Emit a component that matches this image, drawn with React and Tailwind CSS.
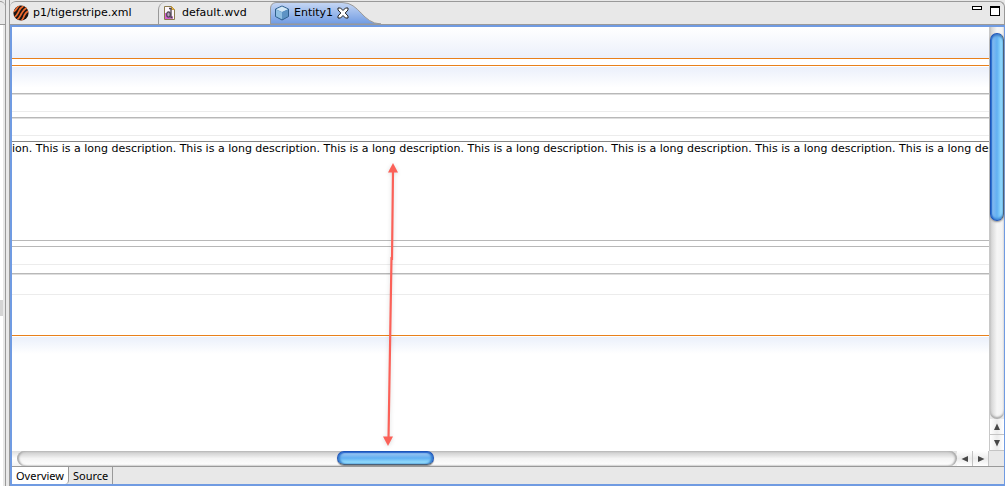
import React, { useState } from 'react';

const DESCRIPTION = 'ion. ' + 'This is a long description. '.repeat(8);

function TigerIcon() {
  return (
    <svg className="w-4 h-4 shrink-0" viewBox="0 0 16 16">
      <defs>
        <clipPath id="tiger-clip">
          <circle cx="8" cy="8" r="7.6" />
        </clipPath>
      </defs>
      <circle cx="8" cy="8" r="7.6" fill="#1c1614" />
      <g clipPath="url(#tiger-clip)" stroke="#ee6a30" strokeWidth="1.7" fill="none">
        <path d="M0 7C2 6 3 5 4 3S5 1 7 0" />
        <path d="M1 12.5C4 11 4.500 9 5.500 7S7 3 10.500 1" />
        <path d="M3.500 15C7 13 7 11 8.500 8.500S10 5 14 2.500" />
        <path d="M8 16C10.500 14 10.500 12 11.500 10S13 7 16 5.500" />
      </g>
    </svg>
  );
}

function DiagramFileIcon() {
  return (
    <svg className="w-4 h-4 shrink-0" viewBox="0 0 16 16">
      <path d="M2.500 1.500H9.500L12.500 4.500V14.500H2.500Z" fill="#fdf6fb" stroke="#8a7a4c" />
      <path d="M9.500 1.500V4.500H12.500Z" fill="#e8bd55" stroke="#c89c3c" />
      <rect x="3" y="8" width="5" height="6" fill="#d45fd0" />
      <rect x="8" y="11" width="3" height="3" fill="#d98ad6" />
      <ellipse cx="6.500" cy="9.500" rx="1.800" ry="2.700" fill="#b9a3c0" stroke="#4b4350" strokeWidth="1.200" />
      <path d="M7 3.500H9V12.500H10.500" fill="none" stroke="#4b4350" strokeWidth="1.300" />
    </svg>
  );
}

function CubeIcon() {
  return (
    <svg className="w-4 h-4 shrink-0" viewBox="0 0 16 16">
      <path d="M8 1L14.500 4V11.500L8 15L1.500 11.500V4Z" fill="#4b83b8" stroke="#2f5f8c" />
      <path d="M8 1.500L14 4.200L8 7L2 4.200Z" fill="#d3e8f6" />
      <path d="M2 4.500L8 7.300V14.300L2 11.200Z" fill="#8fbfe2" />
      <path d="M14 4.500L8 7.300V14.300L14 11.200Z" fill="#5d93c4" />
    </svg>
  );
}

function CloseIcon() {
  return (
    <svg className="w-3 h-3" viewBox="0 0 12 12">
      <path
        d="M1 1H3.500L6 3.500L8.500 1H11V3L8.200 6L11 9V11H8.500L6 8.500L3.500 11H1V9L3.800 6L1 3Z"
        fill="#fff"
        stroke="#222"
        strokeWidth="1"
      />
    </svg>
  );
}

function ArrowIcon({ d }) {
  return (
    <svg className="w-2 h-2" viewBox="0 0 8 8">
      <path d={d} fill="#484848" />
    </svg>
  );
}

function ScrollButton({ label, d, className }) {
  return (
    <button
      type="button"
      aria-label={label}
      className={`flex items-center justify-center shrink-0 border-[#c4c4c4] from-white via-[#ececec] to-white ${className}`}
    >
      <ArrowIcon d={d} />
    </button>
  );
}

// One band of the form: its height, and the rule drawn beneath it
const TOP_BANDS = [
  'h-8 bg-gradient-to-b from-white to-[#ebf0fb] border-b border-[#e8801c]',
  'h-[7px] bg-white border-b border-[#e8801c]',
  'h-[27px] mt-px bg-gradient-to-b from-[#ebf0fb] to-white to-80% border-b border-[#b8b8b8]',
  'h-[18px] border-t border-t-[#dedede] border-b border-b-[#ececec]',
  'h-[6px] border-b border-[#b8b8b8]',
  'h-[18px] border-t border-t-[#dedede] border-b border-b-[#ececec]',
  'h-[6px] border-b border-[#868686]',
];

const BOTTOM_BANDS = [
  'h-[6px] border-t border-[#b8b8b8]',
  'h-[19px] border-t border-t-[#b8b8b8] border-b border-b-[#ececec]',
  'h-[9px] border-b border-[#b8b8b8]',
  'h-[21px] border-t border-t-[#dedede] border-b border-b-[#ececec]',
  'h-[41px] border-b border-[#e8801c]',
  'h-[17px] mt-px bg-gradient-to-b from-[#ebf0fb] to-white',
];

function FormPage() {
  return (
    <div className="relative flex-1 min-w-0 overflow-hidden bg-white">
      {TOP_BANDS.map((band, i) => (
        <div key={i} className={band}></div>
      ))}
      <textarea
        aria-label="Description"
        readOnly
        wrap="off"
        value={DESCRIPTION}
        className="block w-full h-[98px] overflow-hidden resize-none outline-none text-[11px] leading-[14px] text-black"
      />
      {BOTTOM_BANDS.map((band, i) => (
        <div key={i} className={band}></div>
      ))}

      {/* double-headed arrow over the form */}
      <svg className="absolute top-[134px] left-[370px] w-[30px] h-[288px] drop-shadow-sm" viewBox="0 0 30 288">
        <path d="M11 10L10 99M9.500 96L6.500 278" fill="none" stroke="#fb6158" strokeWidth="2.200" />
        <path d="M11 2L16 11.500H6Z" fill="#fb6158" />
        <path d="M6 285L11 275.500H1Z" fill="#fb6158" />
      </svg>
    </div>
  );
}

function VerticalScrollbar() {
  return (
    <div className="flex flex-col w-[15px] shrink-0 border-l border-[#c8c8c8]">
      <div className="flex-1 pt-[6px] rounded-b-full bg-gradient-to-r from-[#cfcfcf] via-[#f6f6f6] to-[#f2f2f2] shadow-[inset_0_-2px_2px_#aaaaaa]">
        <div className="h-[188px] rounded-full border border-[#1d55b8] border-r-[#4a6078] bg-gradient-to-r from-[#8cbcf0] via-[#62b0f2] to-[#a4ecff] shadow-[inset_1px_0_1px_#2c6fd0,inset_0_-2px_2px_#4a94dc,inset_0_2px_2px_#4a86c8,0_1px_2px_#888888]"></div>
      </div>
      <ScrollButton label="Scroll up" d="M4 0.500L7 7H1Z" className="h-4 border-b bg-gradient-to-r" />
      <ScrollButton label="Scroll down" d="M4 7.500L7 1H1Z" className="h-4 border-b bg-gradient-to-r" />
    </div>
  );
}

function HorizontalScrollbar() {
  return (
    <div className="flex h-[15px] shrink-0">
      <div className="flex flex-1 pl-[5px] bg-gradient-to-b from-[#dedede] via-white to-[#f2f2f2]">
        <div className="flex-1 rounded-full bg-gradient-to-b from-[#c8c8c8] via-[#f4f4f4] to-white shadow-[inset_2px_0_2px_#aaaaaa,inset_-2px_0_2px_#aaaaaa]">
          <div className="w-[97px] h-[14px] ml-[34%] rounded-full border border-[#1d55b8] border-b-[#4a6078] bg-gradient-to-b from-[#a4c8f0] via-[#62b0f2] to-[#a4ecff] shadow-[inset_0_1px_1px_#2c68d0,inset_2px_0_2px_#3c84d0,inset_-2px_0_2px_#3c84d0,0_1px_1px_#888888]"></div>
        </div>
      </div>
      <ScrollButton label="Scroll left" d="M0.500 4L7 1V7Z" className="w-4 border-r bg-gradient-to-b" />
      <ScrollButton label="Scroll right" d="M7.500 4L1 1V7Z" className="w-4 border-r bg-gradient-to-b" />
      <div className="w-[15px] bg-[#e8e8e8]"></div>
    </div>
  );
}

function EditorTabs() {
  return (
    <div className="flex h-[23px] border-t border-r border-[#999999] rounded-t-md bg-[#e8e8e8] text-[11px] leading-[14px] text-black">
      <button type="button" className="flex items-center w-[148px] gap-1 pl-[3px] shrink-0">
        <TigerIcon />
        p1/tigerstripe.xml
      </button>
      <button type="button" className="flex items-center w-28 gap-1 pl-[3px] shrink-0 border-l border-[#999999] rounded-tl-lg">
        <DiagramFileIcon />
        default.wvd
      </button>
      <div className="relative flex items-center w-[112px] gap-2 pl-1 shrink-0">
        {/* selected tab with its curved right edge */}
        <svg className="absolute inset-0 w-full h-full" viewBox="0 0 112 22" preserveAspectRatio="none">
          <defs>
            <linearGradient id="tab-fill" x1="0" y1="0" x2="0" y2="1">
              <stop offset="0" stopColor="#c6d7f4" />
              <stop offset="1" stopColor="#709be2" />
            </linearGradient>
          </defs>
          <path
            d="M0.500 22V6Q1 1 6 0.500H72C90 0.500 92 21.500 111 22Z"
            fill="url(#tab-fill)"
            stroke="#999999"
          />
        </svg>
        <button type="button" className="relative flex items-center gap-1">
          <CubeIcon />
          Entity1
        </button>
        <button type="button" aria-label="Close Entity1" className="relative -ml-1">
          <CloseIcon />
        </button>
      </div>
      <div className="flex flex-1 justify-end gap-2 pt-1 pr-1">
        <button type="button" aria-label="Minimize" className="w-[10px] h-1 border border-black bg-white"></button>
        <button type="button" aria-label="Maximize" className="w-[10px] h-[10px] border border-t-2 border-black bg-white"></button>
      </div>
    </div>
  );
}

function PageTabs() {
  const [page, setPage] = useState('Overview');

  return (
    <div className="flex h-[18px] shrink-0 border-t border-[#999999] bg-[#e8e8e8] font-['Noto_Sans',sans-serif] text-[11px] leading-[14px] text-black">
      {['Overview', 'Source'].map((name) => (
        <button
          key={name}
          type="button"
          onClick={() => setPage(name)}
          className={`px-1 border-r border-[#999999] ${page === name ? 'bg-white rounded-br-sm' : ''}`}
        >
          {name}
        </button>
      ))}
    </div>
  );
}

function App() {
  return (
    <div className="flex h-screen overflow-hidden bg-[#e8e8e8] font-['Lucida_Grande','DejaVu_Sans',sans-serif]">
      {/* edge of the neighbouring view */}
      <div className="flex flex-col w-[6px] shrink-0 pt-px border-[#999999] border-r">
        <div className="h-6 border-t border-b border-[#999999] rounded-tr-md"></div>
        <div className="flex flex-col justify-center flex-1 w-[3px] bg-white">
          <div className="h-4 mt-[104px] bg-[#d4d4d4]"></div>
        </div>
      </div>

      <div className="flex flex-col flex-1 min-w-0 ml-[3px] pt-px border-l border-[#999999]">
        <EditorTabs />
        <div className="flex flex-col flex-1 min-h-0 border-t border-[#999999]">
          <div className="flex flex-col flex-1 min-h-0 border-2 border-r border-[#709be2]">
            <div className="flex flex-1 min-h-0">
              <FormPage />
              <VerticalScrollbar />
            </div>
            <HorizontalScrollbar />
            <PageTabs />
          </div>
        </div>
      </div>
    </div>
  );
}

export default App;
